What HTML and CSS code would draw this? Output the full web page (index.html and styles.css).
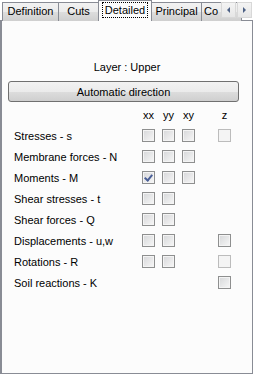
FILE: index.html
```html
<!DOCTYPE html>
<html lang="en">
<head>
    <meta charset="UTF-8">
    <title>Detailed results</title>
    <link rel="stylesheet" href="styles.css">
</head>
<body>

    <div class="tabstrip">
        <div class="tab first w-def">Definition</div>
        <div class="tab w-cuts">Cuts</div>
        <div class="tab selected"><span class="focus">Detailed</span></div>
        <div class="tab w-prin">Principal</div>
        <div class="tab cut">Co</div>
        <!-- scroll arrows sit over the last tab -->
        <div class="scrollers">
            <div class="arrow"><span class="tri left"></span></div>
            <div class="arrow"><span class="tri right"></span></div>
        </div>
    </div>

    <div class="panel">
        <div class="layer">Layer : Upper</div>
        <button class="btn">Automatic direction</button>

        <div class="grid">
            <div></div>
            <div class="head">xx</div>
            <div class="head">yy</div>
            <div class="head">xy</div>
            <div class="head">z</div>

            <div class="label">Stresses - s</div>
            <div><span class="box"></span></div>
            <div><span class="box"></span></div>
            <div><span class="box"></span></div>
            <div><span class="box off"></span></div>

            <div class="label">Membrane forces - N</div>
            <div><span class="box"></span></div>
            <div><span class="box"></span></div>
            <div><span class="box"></span></div>
            <div></div>

            <div class="label">Moments - M</div>
            <div><span class="box checked"></span></div>
            <div><span class="box"></span></div>
            <div><span class="box"></span></div>
            <div></div>

            <div class="label">Shear stresses - t</div>
            <div><span class="box"></span></div>
            <div><span class="box"></span></div>
            <div></div>
            <div></div>

            <div class="label">Shear forces - Q</div>
            <div><span class="box"></span></div>
            <div><span class="box"></span></div>
            <div></div>
            <div></div>

            <div class="label">Displacements - u,w</div>
            <div><span class="box"></span></div>
            <div><span class="box"></span></div>
            <div></div>
            <div><span class="box"></span></div>

            <div class="label">Rotations - R</div>
            <div><span class="box"></span></div>
            <div><span class="box"></span></div>
            <div></div>
            <div><span class="box off"></span></div>

            <div class="label">Soil reactions - K</div>
            <div></div>
            <div></div>
            <div></div>
            <div><span class="box"></span></div>
        </div>
    </div>

</body>
</html>
```

FILE: styles.css
```css
body {
    margin: 0;
    background: #ffffff;
    font-family: "Liberation Sans", Arial, sans-serif;
    font-size: 11px;
    color: #000;
    width: 254px;
    height: 375px;
    overflow: hidden;
}

/* tab strip */
.tabstrip {
    position: relative;
    display: flex;
    align-items: flex-end;
    height: 21px;
    padding-left: 2px;
    overflow: hidden;
    white-space: nowrap;
}

.tab {
    box-sizing: border-box;
    height: 19px;
    line-height: 17px;
    text-align: center;
    border: 1px solid #898c95;
    border-bottom: none;
    border-left: none;
    background: linear-gradient(#f2f2f2, #ebebeb 50%, #dddddd 51%, #cfcfcf);
    flex-shrink: 0;
}

.tab.first {
    border-left: 1px solid #898c95;
}

.w-def {
    width: 57px;
}

.w-cuts {
    width: 40px;
}

.w-prin {
    width: 50px;
}

.tab.selected {
    width: 54px;
    height: 21px;
    line-height: 19px;
    margin-left: -1px;
    border-left: 1px solid #898c95;
    background: #fcfcfc;
    position: relative;
    z-index: 1;
}

.focus {
    display: inline-block;
    line-height: 14px;
    padding: 0 2px;
    border: 1px dotted #000;
}

.tab.cut {
    width: 40px;
    text-align: left;
    padding-left: 2px;
}

.scrollers {
    position: absolute;
    top: 2px;
    left: 221px;
    display: flex;
    z-index: 2;
}

.arrow {
    width: 15px;
    height: 16px;
    box-sizing: border-box;
    border: 1px solid #d8d8d8;
    background: linear-gradient(#f4f4f4, #e6e6e6);
    display: flex;
    align-items: center;
    justify-content: center;
    margin-right: 1px;
}

.tri {
    width: 0;
    height: 0;
    border-top: 3px solid transparent;
    border-bottom: 3px solid transparent;
}

.tri.left {
    border-right: 3px solid #4d6185;
}

.tri.right {
    border-left: 3px solid #4d6185;
}

/* panel */
.panel {
    box-sizing: border-box;
    width: 253px;
    height: 354px;
    margin-top: -1px;
    border: 1px solid #898c95;
    border-left: 2px solid #898c95;
    background: #fcfcfc;
    padding-top: 39px;
}

.layer {
    text-align: center;
    line-height: 14px;
}

.btn {
    display: block;
    box-sizing: border-box;
    width: 231px;
    height: 21px;
    margin: 7px 0 0 6px;
    padding: 0;
    border: 1px solid #707070;
    border-radius: 3px;
    background: linear-gradient(#f2f2f2, #ebebeb 50%, #dddddd 51%, #cfcfcf);
    font-family: "Liberation Sans", Arial, sans-serif;
    font-size: 11px;
    color: #000;
}

.grid {
    display: grid;
    grid-template-columns: 128px 20px 20px 36px 13px;
    grid-auto-rows: 21px;
    margin: 2px 0 0 12px;
    align-items: center;
}

.head {
    width: 13px;
    text-align: center;
    line-height: 14px;
    color: #000;
}

.label {
    line-height: 14px;
}

.box {
    display: block;
    box-sizing: border-box;
    width: 13px;
    height: 13px;
    border: 1px solid #8e8f8f;
    background: linear-gradient(135deg, #d6d7d9, #f7f7f7);
    box-shadow: inset 0 0 0 1px #f4f4f4;
    position: relative;
}

.box.off {
    border-color: #bcbcbc;
    background: #f4f4f4;
    box-shadow: none;
}

.box.checked::after {
    content: "";
    position: absolute;
    left: 3px;
    top: 1px;
    width: 3px;
    height: 6px;
    border-right: 2px solid #4a5f97;
    border-bottom: 2px solid #4a5f97;
    transform: rotate(40deg);
}
```
